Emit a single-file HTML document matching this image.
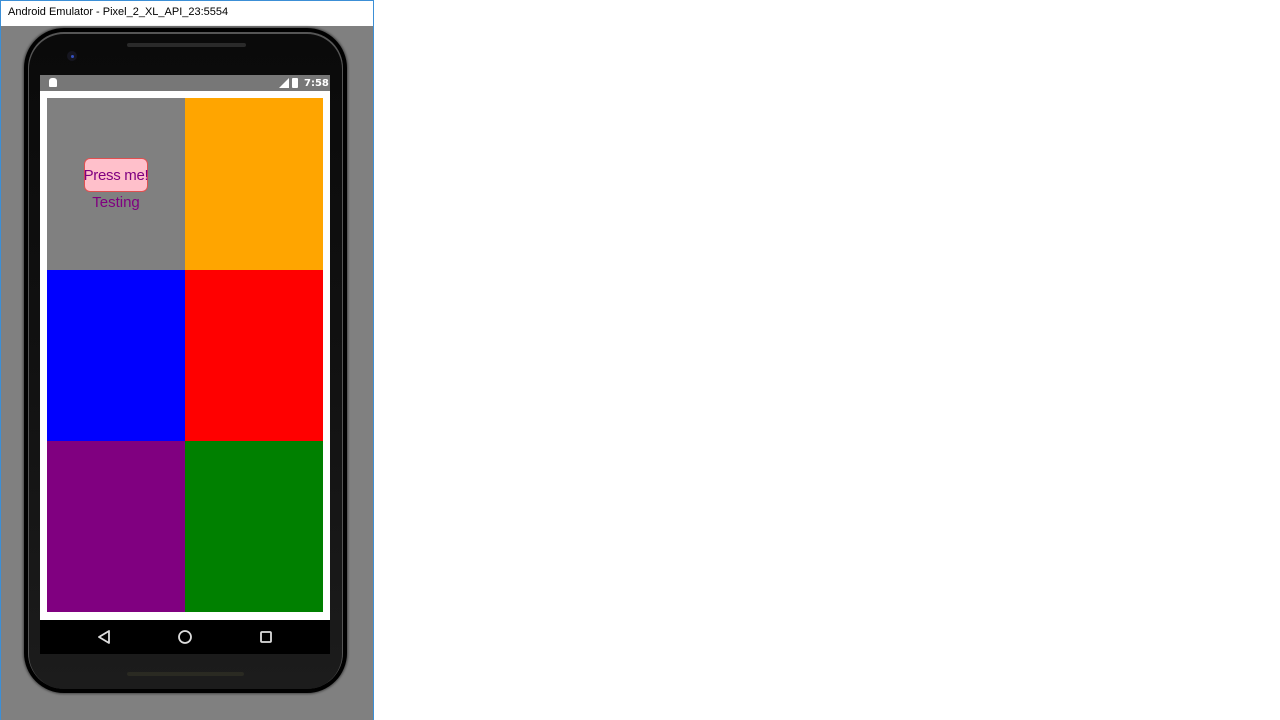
<!DOCTYPE html>
<html><head><style>
body{margin:0;width:1280px;height:720px;background:#fff;position:relative;overflow:hidden;font-family:"Liberation Sans",sans-serif}
.a{position:absolute}
</style></head><body>
<div class="a" style="left:0;top:0;width:374px;height:720px;background:#808080;border-left:1px solid #3c8fd6;border-right:1px solid #3c8fd6;box-sizing:border-box"></div>
<div class="a" style="left:1px;top:0;width:372px;height:26px;background:#fff;border-top:1px solid #3c8fd6;box-sizing:border-box"></div>
<div class="a" style="left:8px;top:6px;font-size:11px;color:#000">Android Emulator - Pixel_2_XL_API_23:5554</div>
<div class="a" style="left:24px;top:28px;width:323px;height:665px;background:#000;border-radius:40px;box-shadow:0 0 2px 1px #444"></div>
<div class="a" style="left:28px;top:32px;width:315px;height:657px;background:linear-gradient(#0a0a0a,#111 50%,#1c1c1c);border-radius:36px;box-shadow:inset 0 1px 0 1px #555"></div>
<div class="a" style="left:127px;top:43px;width:119px;height:4px;background:#2a2a2a;border-radius:3px"></div>
<div class="a" style="left:67px;top:51px;width:10px;height:10px;background:#161620;border-radius:50%"></div>
<div class="a" style="left:71px;top:55px;width:3px;height:3px;background:#3450c0;border-radius:50%"></div>
<div class="a" style="left:127px;top:672px;width:117px;height:4px;background:#2a2a22;border-radius:3px"></div>
<div class="a" style="left:40px;top:75px;width:290px;height:579px;background:#000"></div>
<div class="a" style="left:40px;top:75px;width:290px;height:16px;background:#777"></div>
<div class="a" style="left:49px;top:78px;width:8px;height:9px;background:#fff;border-radius:3px 3px 1px 1px"></div>
<div class="a" style="left:292px;top:78px;width:6px;height:10px;background:#fff;border-radius:1px"></div>
<svg class="a" style="left:275px;top:78px" width="14" height="10"><polygon points="14,0 14,10 4,10" fill="#fff"/></svg>
<div class="a" style="left:304px;top:78px;font-size:10px;font-weight:bold;color:#fff;font-family:'DejaVu Sans','Liberation Sans',sans-serif">7:58</div>
<div class="a" style="left:40px;top:91px;width:290px;height:529px;background:#fff"></div>
<div class="a" style="left:47px;top:98px;width:138px;height:172px;background:#808080"></div>
<div class="a" style="left:185px;top:98px;width:138px;height:172px;background:#ffa500"></div>
<div class="a" style="left:47px;top:270px;width:138px;height:171px;background:#0000ff"></div>
<div class="a" style="left:185px;top:270px;width:138px;height:171px;background:#ff0000"></div>
<div class="a" style="left:47px;top:441px;width:138px;height:171px;background:#800080"></div>
<div class="a" style="left:185px;top:441px;width:138px;height:171px;background:#008000"></div>
<div class="a" style="left:84px;top:158px;width:64px;height:34px;background:#ffc0cb;border:1px solid #e05050;border-radius:6px;box-sizing:border-box;font-size:15px;color:#800080;display:flex;align-items:center;justify-content:center;white-space:nowrap;letter-spacing:-0.3px">Press me!</div>
<div class="a" style="left:47px;top:194px;width:138px;text-align:center;font-size:15px;color:#800080">Testing</div>
<svg class="a" style="left:40px;top:620px" width="290" height="34">
<polygon points="69,11 69,23 59,17" fill="none" stroke="#ddd" stroke-width="1.8" stroke-linejoin="round"/>
<circle cx="145" cy="17" r="6" fill="none" stroke="#ddd" stroke-width="1.8"/>
<rect x="221" y="12" width="10" height="10" fill="none" stroke="#ddd" stroke-width="1.8" rx="1"/>
</svg>
</body></html>
